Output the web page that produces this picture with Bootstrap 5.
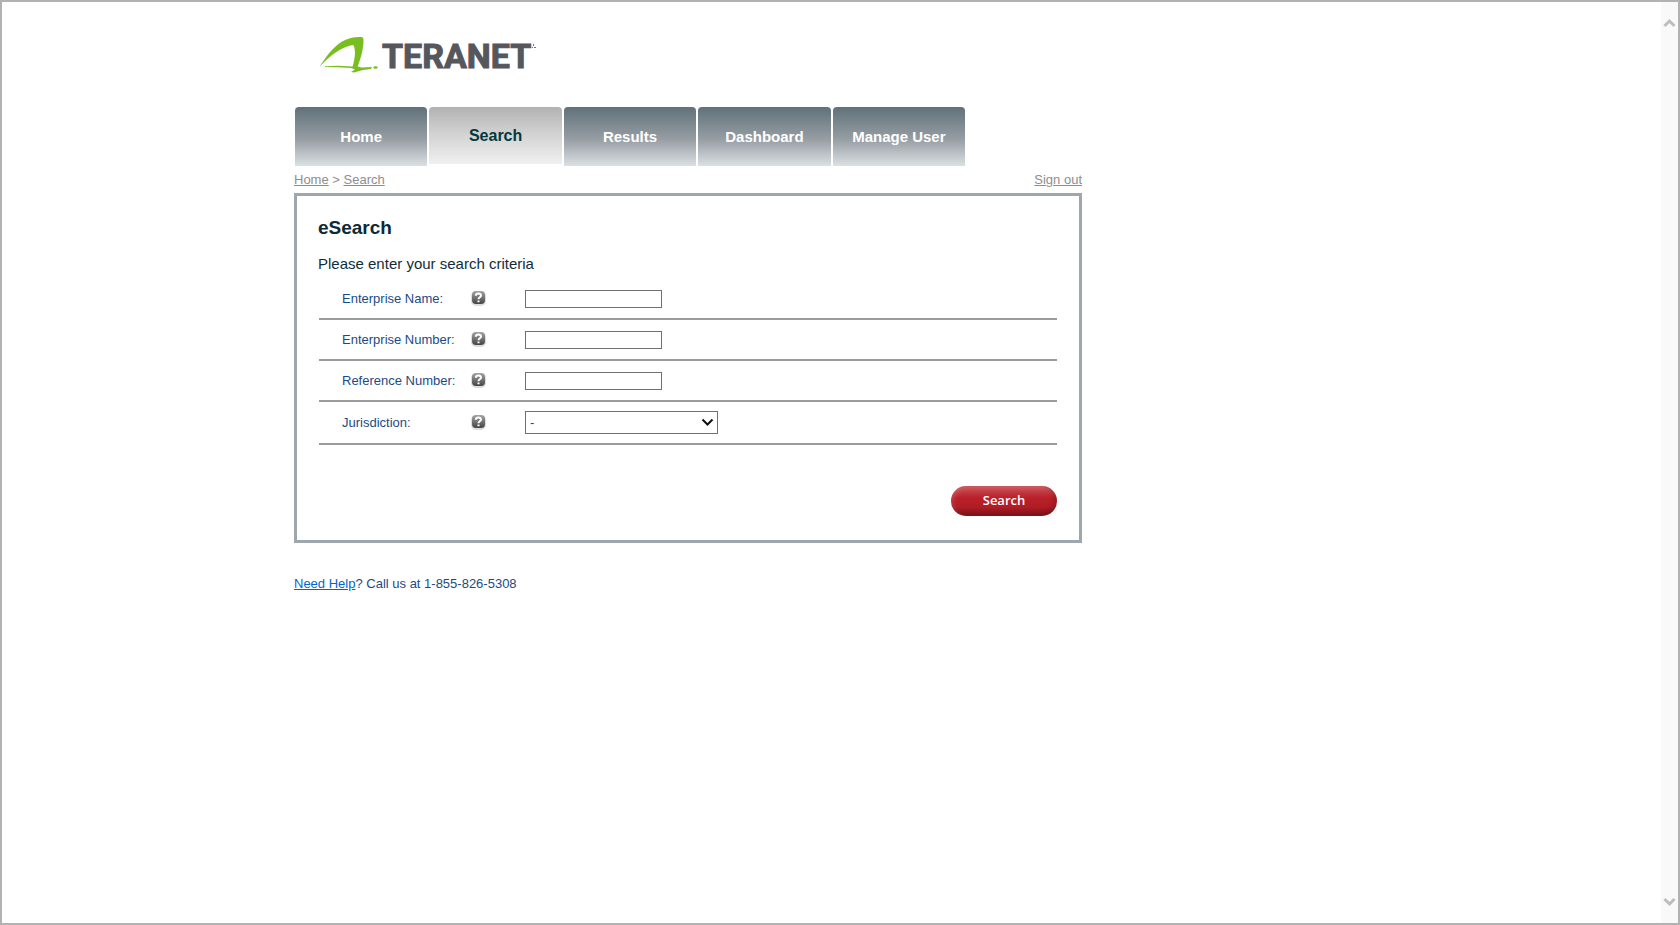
<!DOCTYPE html>
<html lang="en">
<head>
<meta charset="utf-8">
<meta name="viewport" content="width=device-width, initial-scale=1">
<title>eSearch - Teranet</title>
<link href="https://cdn.jsdelivr.net/npm/bootstrap@5.3.0/dist/css/bootstrap.min.css" rel="stylesheet">
<style>
  body { font-family: "Liberation Sans", Arial, sans-serif; font-size: 13px; line-height: 20px; color: #1a4b86; background: #fff; }
  .frame { border: 2px solid #b2b2b2; }
  .site { width: 100%; max-width: 1075px; }
  .site-body { max-width: 788px; }
  .logo { height: 81px; padding: 9px 0 0 24px; margin-top: 24px; }
  .logo-name { font-family: Roboto, sans-serif; font-weight: 700; font-size: 34px; line-height: 42px; color: #56565d; -webkit-text-stroke: 1px #56565d; }
  .main-tabs { max-width: 672px; gap: 2px; padding: 0 1px; }
  .main-tabs .nav-link { height: 59px; padding: 0; border-radius: 4px 4px 0 0; color: #fff; font-size: 15px; font-weight: 700; background: linear-gradient(#60717a, #979ea4 55%, #dbe0e2); }
  .main-tabs .nav-link.active { height: 57px; color: #04393f; font-size: 16px; background: linear-gradient(#b2b2b2, #d4d4d4 50%, #f0f0ef); }
  .crumbs { padding: 4px 0 3px; }
  .crumbs, .crumbs a { color: #8e8e8e; }
  .panel { border: 3px solid #9ea7ad; padding: 20px 22px 24px 21px; }
  .panel h1 { font-size: 19px; line-height: 24px; font-weight: 700; color: #0b2a38; margin-bottom: 14px; }
  .intro { font-size: 15px; line-height: 20px; color: #0f2e3c; margin-bottom: 5px; }
  .field { height: 41px; padding-left: 23px; border-bottom: 2px solid #9b9b9b; margin-left: 1px; }
  .field label { width: 129px; }
  .field-last { height: 43px; }
  .help { width: 54px; line-height: 0; padding-bottom: 2px; }
  .help button { border: 0; padding: 0; background: none; line-height: 0; }
  .field input { width: 137px; height: 18px; border: 1px solid #707070; padding: 0 4px; }
  .pick { width: 193px; height: 23px; border: 1px solid #707070; padding: 0 4px; appearance: none; color: #1a4b86; background: #fff; }
  .pick-arrow { position: absolute; right: 4px; top: 6px; pointer-events: none; }
  .actions { margin-top: 41px; }
  .go { width: 106px; height: 30px; border: 0; border-radius: 15px; color: #fff; font-size: 13px; font-family: "Open Sans", sans-serif; font-weight: 600; line-height: 18px; padding: 0 0 3px; background: linear-gradient(#c9555b, #b92029 40%, #b01d25 70%, #7e1218); box-shadow: inset -3px -2px 4px #6d0e1466, inset 2px 2px 4px #e0808455; }
  .call { margin-top: 31px; }
  .call a { color: #0066cc; }
  .scroller { width: 17px; background: #f9f9f9; padding: 15px 0; }
</style>
</head>
<body>
<div class="frame d-flex min-vh-100">
  <div class="flex-grow-1 d-flex justify-content-center">
    <div class="site">
      <div class="site-body">
        <header class="logo d-flex align-items-start">
          <svg width="64" height="40" viewBox="0 0 64 40" aria-hidden="true" fill="#78be20">
            <path d="M1.500 32C7 23 14 13 24 6.500C31 2.500 38 1.500 44 2Q45.500 2.300 45.500 5C45.500 15 42.500 24 39.500 32H34.500C37 24 38 16 35.500 10C25 11 12 20 1.500 32Z"/>
            <path d="M7 31.200L20 30.800L34 31.500L40 31.500L43 32.500L54 32L53 34L45 35L36 37.500L33 37L37 34.500L33 33Q20 32 7 31.900Z"/>
            <ellipse cx="57.500" cy="32.500" rx="2.200" ry="1.300"/>
          </svg>
          <span class="logo-name">TERANET</span>
          <svg width="5" height="16" viewBox="0 0 5 16" aria-hidden="true" fill="none" stroke="#777"><path d="M1 12.500H2M3 12.500H5M2.500 9V11"/></svg>
        </header>
        <nav class="nav main-tabs flex-nowrap" aria-label="Main">
          <a class="nav-link w-100 d-flex align-items-center justify-content-center" href="#">Home</a>
          <a class="nav-link active w-100 d-flex align-items-center justify-content-center" href="#" aria-current="page">Search</a>
          <a class="nav-link w-100 d-flex align-items-center justify-content-center" href="#">Results</a>
          <a class="nav-link w-100 d-flex align-items-center justify-content-center" href="#">Dashboard</a>
          <a class="nav-link w-100 d-flex align-items-center justify-content-center text-nowrap" href="#">Manage User</a>
        </nav>
        <div class="crumbs d-flex justify-content-between">
          <div><a href="#">Home</a> &gt; <a href="#">Search</a></div>
          <a href="#">Sign out</a>
        </div>
        <main class="panel">
          <h1>eSearch</h1>
          <p class="intro">Please enter your search criteria</p>
          <form>
            <div class="field d-flex align-items-center">
              <label for="ename">Enterprise Name:</label>
              <div class="help"><button type="button" aria-label="Help on name"><svg width="15" height="16"><use href="#q"/></svg></button></div>
              <input id="ename" type="text">
            </div>
            <div class="field d-flex align-items-center">
              <label for="enum">Enterprise Number:</label>
              <div class="help"><button type="button" aria-label="Help on number"><svg width="15" height="16"><use href="#q"/></svg></button></div>
              <input id="enum" type="text">
            </div>
            <div class="field d-flex align-items-center">
              <label for="rnum">Reference Number:</label>
              <div class="help"><button type="button" aria-label="Help on reference"><svg width="15" height="16"><use href="#q"/></svg></button></div>
              <input id="rnum" type="text">
            </div>
            <div class="field field-last d-flex align-items-center">
              <label for="jur">Jurisdiction:</label>
              <div class="help"><button type="button" aria-label="Help on jurisdiction"><svg width="15" height="16"><use href="#q"/></svg></button></div>
              <div class="position-relative d-flex">
                <select id="jur" class="pick rounded-0"><option>-</option></select>
                <svg class="pick-arrow" width="13" height="11" viewBox="0 0 13 11" aria-hidden="true"><path d="M1.500 2.500L6.500 7.500L11.500 2.500" fill="none" stroke="#111" stroke-width="2"/></svg>
              </div>
            </div>
            <div class="actions d-flex justify-content-end">
              <button class="go" type="submit">Search</button>
            </div>
          </form>
        </main>
        <p class="call mb-0"><a href="#">Need Help</a>? Call us at 1-855-826-5308</p>
      </div>
    </div>
  </div>
  <div class="scroller d-flex flex-column justify-content-between align-items-center" aria-hidden="true">
    <svg width="13" height="11" viewBox="0 0 13 11"><path d="M1.500 9L6.500 4L11.500 9" fill="none" stroke="#bdbdbd" stroke-width="3"/></svg>
    <svg width="13" height="11" viewBox="0 0 13 11"><path d="M1.500 2L6.500 7L11.500 2" fill="none" stroke="#bdbdbd" stroke-width="3"/></svg>
  </div>
</div>
<svg class="position-absolute" width="0" height="0" aria-hidden="true">
  <defs>
    <linearGradient id="g" x1="0" y1="0" x2="0" y2="1"><stop offset="0" stop-color="#a5a5a5"/><stop offset="1" stop-color="#444"/></linearGradient>
    <symbol id="q" viewBox="0 0 15 16">
      <rect x="0" y="1" width="15" height="15" rx="5" fill="#ddd"/>
      <rect x="1" y="1" width="13" height="13" rx="4" fill="url(#g)"/>
      <path d="M4.800 5.800C5 2.800 10.200 2.800 10 5.800C9.900 7.400 7.500 7.200 7.500 9.300M7.500 10.500V12.300" fill="none" stroke="#fff" stroke-width="2"/>
    </symbol>
  </defs>
</svg>
<script src="https://cdn.jsdelivr.net/npm/bootstrap@5.3.0/dist/js/bootstrap.bundle.min.js"></script>
</body>
</html>
